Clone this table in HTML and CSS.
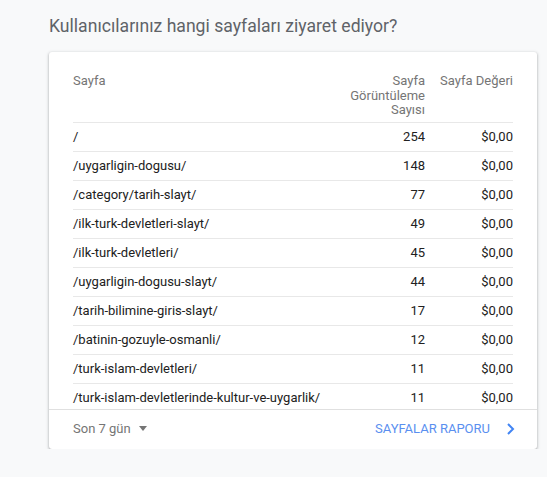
FILE: index.html
```
<!DOCTYPE html>
<html lang="tr">
<head>
<meta charset="utf-8">
<link rel="stylesheet" href="styles.css">
</head>
<body>
<div class="page">
  <h2 class="title">Kullanıcılarınız hangi sayfaları ziyaret ediyor?</h2>
  <div class="card">
    <div class="scroll">
      <table class="tbl">
        <colgroup><col><col class="c2"><col class="c3"></colgroup>
        <thead>
          <tr><th class="left">Sayfa</th><th>Sayfa Görüntüleme Sayısı</th><th>Sayfa Değeri</th></tr>
        </thead>
        <tbody>
          <tr><td class="left">/</td><td>254</td><td>$0,00</td></tr>
          <tr><td class="left">/uygarligin-dogusu/</td><td>148</td><td>$0,00</td></tr>
          <tr><td class="left">/category/tarih-slayt/</td><td>77</td><td>$0,00</td></tr>
          <tr><td class="left">/ilk-turk-devletleri-slayt/</td><td>49</td><td>$0,00</td></tr>
          <tr><td class="left">/ilk-turk-devletleri/</td><td>45</td><td>$0,00</td></tr>
          <tr><td class="left">/uygarligin-dogusu-slayt/</td><td>44</td><td>$0,00</td></tr>
          <tr><td class="left">/tarih-bilimine-giris-slayt/</td><td>17</td><td>$0,00</td></tr>
          <tr><td class="left">/batinin-gozuyle-osmanli/</td><td>12</td><td>$0,00</td></tr>
          <tr><td class="left">/turk-islam-devletleri/</td><td>11</td><td>$0,00</td></tr>
          <tr><td class="left">/turk-islam-devletlerinde-kultur-ve-uygarlik/</td><td>11</td><td>$0,00</td></tr>
        </tbody>
      </table>
    </div>
    <div class="footer">
      <div class="range">Son 7 gün <span class="caret"></span></div>
      <a class="report">SAYFALAR RAPORU
        <svg class="chev" width="10" height="14" viewBox="0 0 10 14"><path d="M2 2 L7 7 L2 12" fill="none" stroke="#4285f4" stroke-width="2"/></svg>
      </a>
    </div>
  </div>
</div>
</body>
</html>
```
FILE: styles.css
```
html, body {
  margin: 0;
  padding: 0;
  background: #f8f9fa;
  font-family: Roboto, "Liberation Sans", sans-serif;
}
.page {
  padding: 14px 10px 0 49px;
}
.title {
  margin: 0 0 14px;
  font-size: 17.6px;
  line-height: 24px;
  font-weight: 400;
  color: #5f6368;
}
.card {
  width: 488px;
  background: #fff;
  border-radius: 3px;
  box-shadow: 0 1px 2px rgba(60,64,67,.3), 0 1px 3px 1px rgba(60,64,67,.15);
}
.scroll {
  height: 357px;
  overflow: hidden;
  padding: 0 24px;
  box-sizing: border-box;
}
.tbl {
  width: 440px;
  margin-top: 22px;
  border-collapse: collapse;
  table-layout: fixed;
  font-size: 13px;
}
.c2 { width: 92px; }
.c3 { width: 88px; }
.tbl th {
  font-weight: 400;
  color: #757575;
  line-height: 14.5px;
  text-align: right;
  vertical-align: top;
  padding: 0 0 4px 12px;
  border-bottom: 1px solid #e8e8e8;
}
.tbl th:last-child { padding-left: 10px; }
.tbl th.left, .tbl td.left { text-align: left; padding-left: 0; }
.tbl td {
  height: 28px;
  padding: 0 0 0 12px;
  text-align: right;
  color: #212121;
  border-bottom: 1px solid #e8e8e8;
  white-space: nowrap;
}
.footer {
  height: 37px;
  padding: 0 21px 2px 24px;
  border-top: 1px solid #e0e0e0;
  display: flex;
  align-items: center;
  justify-content: space-between;
}
.range {
  font-size: 13px;
  color: #757575;
  display: flex;
  align-items: center;
}
.caret {
  display: inline-block;
  width: 0;
  height: 0;
  margin-left: 8px;
  border-left: 4.5px solid transparent;
  border-right: 4.5px solid transparent;
  border-top: 5px solid #757575;
}
.report {
  font-size: 13px;
  color: #5a8ff0;
  display: flex;
  align-items: center;
  gap: 16px;
}
.chev { display: block; }
```
